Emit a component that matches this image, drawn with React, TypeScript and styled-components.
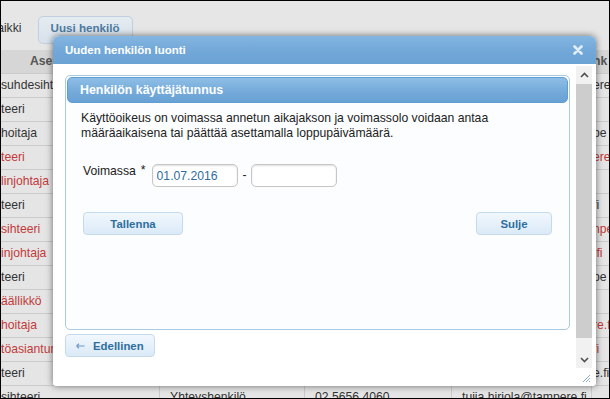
import styled, { createGlobalStyle } from "styled-components";

const GlobalStyle = createGlobalStyle`
  html, body {
    margin: 0;
    padding: 0;
  }
  body {
    font-family: "Liberation Sans", Arial, sans-serif;
  }
`;

const Frame = styled.div`
  position: relative;
  width: 610px;
  height: 399px;
  box-sizing: border-box;
  border: 1px solid #000;
  overflow: hidden;
  background: #e6e6e6;
  font-family: "Liberation Sans", Arial, sans-serif;
  font-size: 12.2px;
  color: #333;
`;

const Toolbar = styled.div`
  height: 49px;
  box-sizing: border-box;
  padding-top: 15px;
  display: flex;
  align-items: flex-start;
`;

const ToolbarLabel = styled.span`
  margin-left: -12px;
  line-height: 24px;
  color: #333;
`;

const ToolbarTab = styled.div`
  margin-left: 16px;
  width: 95px;
  height: 28px;
  box-sizing: border-box;
  border: 1px solid #c1d0dc;
  border-radius: 5px;
  background: linear-gradient(#e4ebf1, #d8e2eb);
  color: #4c7aa2;
  font-weight: bold;
  font-size: 11.6px;
  text-align: center;
  line-height: 22px;
`;

const Table = styled.div`
  display: flex;
  flex-direction: column;
`;

const Row = styled.div<{ $head?: boolean }>`
  display: grid;
  grid-template-columns: 159px 145px 147px 140px 1fr;
  height: 24px;
  box-sizing: border-box;
  border-bottom: 1px solid #cbcbcb;
  background: ${(p) => (p.$head ? "#d6d6d6" : "#e5e5e5")};
  font-weight: ${(p) => (p.$head ? "bold" : "normal")};
  color: ${(p) => (p.$head ? "#555" : "#333")};
`;

const Cell = styled.div<{ $pad?: number; $red?: boolean; $last?: boolean }>`
  padding-left: ${(p) => p.$pad ?? 10}px;
  border-right: ${(p) => (p.$last ? "none" : "1px solid #cbcbcb")};
  line-height: 23px;
  white-space: nowrap;
  overflow: hidden;
  color: ${(p) => (p.$red ? "#c23a3a" : "inherit")};
`;

const Dialog = styled.div`
  position: absolute;
  left: 52px;
  top: 35px;
  width: 543px;
  height: 350px;
  background: #fff;
  border-radius: 6px 6px 3px 3px;
  box-shadow: 0 0 7px rgba(0, 0, 0, 0.55);
  display: flex;
  flex-direction: column;
  overflow: hidden;
`;

const DialogHeader = styled.div`
  height: 28px;
  flex: none;
  display: flex;
  align-items: center;
  justify-content: space-between;
  padding: 0 13px 0 12px;
  background: linear-gradient(#84b6e1, #74a9d9 45%, #6ba3d5);
  color: #fff;
  font-weight: bold;
  font-size: 11.5px;
`;

const DialogBody = styled.div`
  flex: 1;
  display: flex;
  flex-direction: column;
  padding: 2px 4px 0 12px;
  min-height: 0;
`;

const ScrollArea = styled.div`
  flex: 1;
  display: flex;
  min-height: 0;
`;

const ScrollContent = styled.div`
  flex: 1;
  padding: 9px 6px 0 0;
  overflow: hidden;
`;

const Scrollbar = styled.div`
  width: 16px;
  display: flex;
  flex-direction: column;
  background: #f1f1f1;
`;

const ScrollButton = styled.div<{ $h: number }>`
  height: ${(p) => p.$h}px;
  display: flex;
  align-items: center;
  justify-content: center;
`;

const ScrollThumb = styled.div`
  height: 254px;
  background: #cdcdcd;
`;

const ScrollTrack = styled.div`
  flex: 1;
`;

const Footer = styled.div`
  height: 18px;
  display: flex;
  justify-content: flex-end;
  align-items: flex-end;
  padding: 0 1px 3px 0;
  box-sizing: border-box;
`;

const Panel = styled.div`
  height: 255px;
  box-sizing: border-box;
  border: 1px solid #a9cae3;
  border-radius: 5px;
  padding: 1px;
  background: #fcfdfe;
`;

const PanelHeader = styled.div`
  height: 26px;
  box-sizing: border-box;
  border: 1px solid #5f9ed3;
  border-radius: 5px;
  background: linear-gradient(#8ebee6, #77acdb 50%, #68a1d4);
  color: #fff;
  font-weight: bold;
  font-size: 12.4px;
  line-height: 24px;
  padding-left: 12px;
`;

const PanelBody = styled.div`
  padding: 8px 14px 0 14px;
`;

const Text = styled.p`
  margin: 0;
  line-height: 15px;
  color: #222;
`;

const FormRow = styled.div`
  display: flex;
  align-items: flex-start;
  margin-top: 23px;
  padding-left: 2px;
`;

const Label = styled.span`
  line-height: 15px;
  color: #222;
`;

const Star = styled.span`
  margin-left: 5px;
  line-height: 13px;
  color: #222;
`;

const DateInput = styled.input`
  margin-left: 6px;
  width: 86px;
  height: 23px;
  box-sizing: border-box;
  border: 1px solid #c6c6c6;
  border-radius: 5px;
  box-shadow: inset 0 1px 2px rgba(0, 0, 0, 0.13);
  padding: 0 0 0 4px;
  font-family: "Liberation Sans", Arial, sans-serif;
  font-size: 12.2px;
  color: #2f6c9f;
  background: #fff;
  outline: none;
`;

const Dash = styled.span`
  margin: 0 0 0 5px;
  width: 8px;
  line-height: 23px;
  color: #222;
`;

const ButtonRow = styled.div`
  display: flex;
  justify-content: space-between;
  margin-top: 25px;
  padding: 0 2px;
`;

const Button = styled.button<{ $w: number }>`
  width: ${(p) => p.$w}px;
  height: 23px;
  box-sizing: border-box;
  border: 1px solid #c5dbec;
  border-radius: 4px;
  background: linear-gradient(#f1f7fd, #dbeaf7);
  color: #2e6e9e;
  font-family: "Liberation Sans", Arial, sans-serif;
  font-weight: bold;
  font-size: 11.4px;
  display: flex;
  align-items: center;
  justify-content: center;
  gap: 8px;
  padding: 0;
`;

const BackButton = styled(Button)`
  margin-top: 4px;
  justify-content: flex-start;
  padding-left: 10px;
`;

const rows = [
  { a: "suhdesihteeri", e: "ere" },
  { a: "teeri", e: "" },
  { a: "hoitaja", e: "pe" },
  { a: "teeri", e: "ere", red: true },
  { a: "linjohtaja", e: "", red: true },
  { a: "teeri", e: "fi" },
  { a: "sihteeri", e: "npe", red: true },
  { a: "injohtaja", e: ".fi", red: true },
  { a: "teeri", e: "pe" },
  { a: "äällikkö", e: "", red: true },
  { a: "hoitaja", e: "re.fi", red: true },
  { a: "töasiantuntija", e: "fi", red: true },
  { a: "teeri", e: "e.fi" },
];

const App = () => {
  return (
    <>
      <GlobalStyle />
      <Frame>
        <Toolbar>
          <ToolbarLabel>Kaikki</ToolbarLabel>
          <ToolbarTab>Uusi henkilö</ToolbarTab>
        </Toolbar>
        <Table>
          <Row $head>
            <Cell $pad={29}>Asema</Cell>
            <Cell>Rooli</Cell>
            <Cell>Puhelin</Cell>
            <Cell>Sähköposti</Cell>
            <Cell $pad={1} $last>
              hk
            </Cell>
          </Row>
          {rows.map((r, i) => (
            <Row key={i}>
              <Cell $pad={0} $red={r.red}>
                {r.a}
              </Cell>
              <Cell />
              <Cell />
              <Cell />
              <Cell $pad={1} $red={r.red} $last>
                {r.e}
              </Cell>
            </Row>
          ))}
          <Row>
            <Cell $pad={0}>sihteeri</Cell>
            <Cell>Yhteyshenkilö</Cell>
            <Cell>02 5656 4060</Cell>
            <Cell>tuija.hiriola@tampere.fi</Cell>
            <Cell $last />
          </Row>
        </Table>

        <Dialog>
          <DialogHeader>
            <span>Uuden henkilön luonti</span>
            <svg width="10" height="10" viewBox="0 0 10 10">
              <path d="M1.5 1.5 L8.5 8.5 M8.5 1.5 L1.5 8.5" stroke="#e3edf7" strokeWidth="2.6" strokeLinecap="round" />
            </svg>
          </DialogHeader>
          <DialogBody>
            <ScrollArea>
              <ScrollContent>
                <Panel>
                  <PanelHeader>Henkilön käyttäjätunnus</PanelHeader>
                  <PanelBody>
                    <Text>
                      Käyttöoikeus on voimassa annetun aikajakson ja voimassolo voidaan antaa
                      <br />
                      määräaikaisena tai päättää asettamalla loppupäivämäärä.
                    </Text>
                    <FormRow>
                      <Label>Voimassa</Label>
                      <Star>*</Star>
                      <DateInput defaultValue="01.07.2016" />
                      <Dash>-</Dash>
                      <DateInput defaultValue="" style={{ marginLeft: 0 }} />
                    </FormRow>
                    <ButtonRow>
                      <Button $w={100}>Tallenna</Button>
                      <Button $w={76}>Sulje</Button>
                    </ButtonRow>
                  </PanelBody>
                </Panel>
                <BackButton $w={90}>
                  <svg width="9" height="6" viewBox="0 0 9 6">
                    <path d="M0.5 3 H8.5 M0.5 3 L3 0.8 M0.5 3 L3 5.2" stroke="#6f9cc4" strokeWidth="1.2" fill="none" />
                  </svg>
                  Edellinen
                </BackButton>
              </ScrollContent>
              <Scrollbar>
                <ScrollButton $h={18}>
                  <svg width="9" height="6" viewBox="0 0 9 6">
                    <path d="M1 5 L4.5 1.5 L8 5" stroke="#505050" strokeWidth="1.6" fill="none" />
                  </svg>
                </ScrollButton>
                <ScrollThumb />
                <ScrollTrack />
                <ScrollButton $h={17}>
                  <svg width="9" height="6" viewBox="0 0 9 6">
                    <path d="M1 1 L4.5 4.5 L8 1" stroke="#505050" strokeWidth="1.6" fill="none" />
                  </svg>
                </ScrollButton>
              </Scrollbar>
            </ScrollArea>
            <Footer>
              <svg width="10" height="10" viewBox="0 0 10 10">
                <path d="M9 2 L2 9 M9 5 L5 9 M9 8 L8 9" stroke="#8aa8c4" strokeWidth="1" />
              </svg>
            </Footer>
          </DialogBody>
        </Dialog>
      </Frame>
    </>
  );
};

export default App;
